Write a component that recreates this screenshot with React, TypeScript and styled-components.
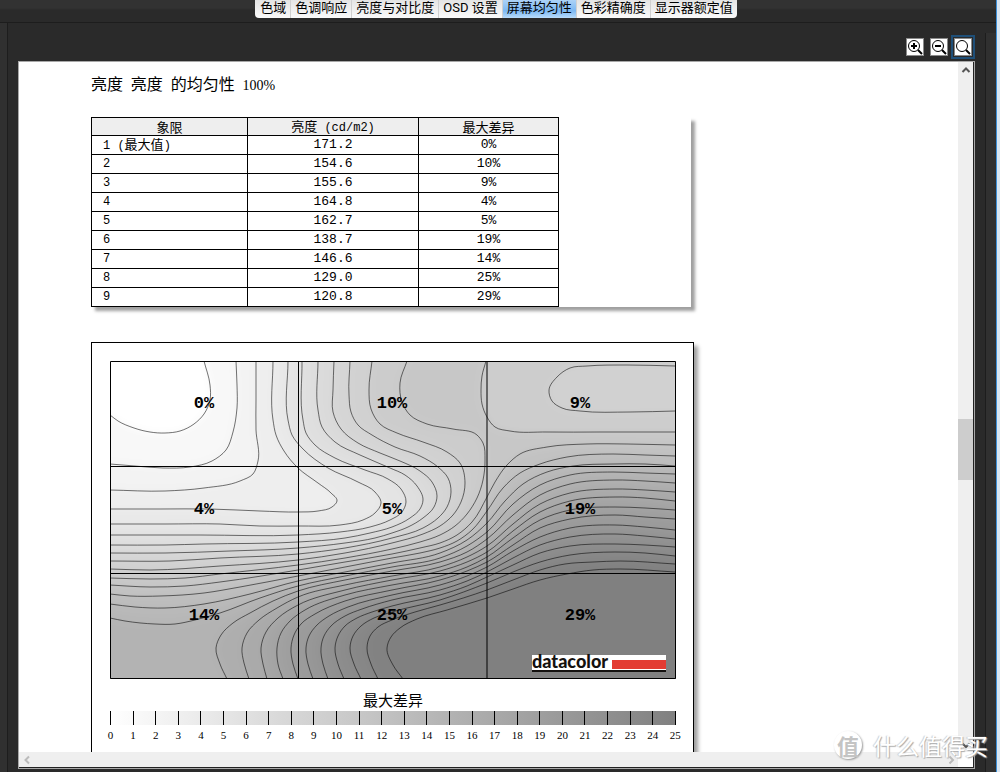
import React from 'react';
import styled, { createGlobalStyle, css } from 'styled-components';

const GlobalStyle = createGlobalStyle`
  * { box-sizing: border-box; }
  body {
    margin: 0;
    background: #2a2a2a;
    color: #000;
    font-family: "Noto Sans CJK SC", sans-serif;
  }
  button { font-family: inherit; padding: 0; cursor: pointer; }
`;

const Window = styled.div`
  position: relative;
  display: flex;
  height: 100vh;
  background: linear-gradient(#323232 8px, #2a2a2a 10px);
`;

const Body = styled.div`
  flex: 1;
  min-width: 0;
  display: flex;
  flex-direction: column;
`;

const WindowEdge = styled.div`
  width: 4px;
  border-left: 1px solid #3c8fd8;
  background: #d9e6f2;
`;

const TabRow = styled.nav`
  height: 23px;
  display: flex;
  justify-content: center;
  align-items: flex-start;
  padding-right: 4px;
  border-bottom: 1px solid #1d1d1d;
`;

const TabGroup = styled.div`
  display: flex;
  height: 18px;
  border-radius: 0 0 4px 4px;
  background: linear-gradient(#e4e4e4, #fafafa);
`;

const Tab = styled.button<{ $active?: boolean }>`
  height: 18px;
  padding: 0 4px 3px;
  border: 0;
  border-right: 1px solid #d0d0d0;
  background: transparent;
  font-family: Roboto, "Noto Sans CJK SC", sans-serif;
  font-size: 13px;
  line-height: 15px;
  white-space: nowrap;
  color: #000;
  &:first-child { padding-left: 5px; }
  &:last-child { border-right: 0; }
  ${p => p.$active && css`
    background: linear-gradient(#acd2f7, #7cb8f2 60%, #b9dcfb);
  `}
`;

const Columns = styled.div`
  flex: 1;
  min-height: 0;
  display: flex;
`;

const Rail = styled.div<{ $side: 'left' | 'right' }>`
  ${p => p.$side === 'left'
    ? css`width: 8px; border-right: 1px solid #1d1d1d; background: #303030;`
    : css`width: 11px; margin-top: 10px; border-left: 1px solid #1d1d1d; background: #303030;`}
`;

const Main = styled.main`
  flex: 1;
  min-width: 0;
  display: flex;
  flex-direction: column;
  padding: 0 10px 3px;
`;

const ZoomBar = styled.div`
  height: 38px;
  display: flex;
  justify-content: flex-end;
  align-items: center;
  padding-top: 10px;
`;

const ZoomButton = styled.button<{ $focused?: boolean }>`
  width: 24px;
  height: 24px;
  display: grid;
  place-items: center;
  border: 2px solid ${p => (p.$focused ? '#1f4f78' : 'transparent')};
  background: transparent;
  svg { display: block; border: 1px solid #8a8a8a; background: #fff; }
`;

const Viewer = styled.div`
  flex: 1;
  min-height: 0;
  display: grid;
  grid-template-columns: minmax(0, 1fr) 15px;
  grid-template-rows: minmax(0, 1fr) 15px;
  padding: 0 1px 1px 0;
  border: 1px solid #a8a8a8;
  background: #222;
`;

const Page = styled.div`
  overflow: hidden;
  padding: 9px 72px 0;
  background: #fff;
`;

const Bar = styled.div<{ $vertical?: boolean }>`
  display: flex;
  flex-direction: ${p => (p.$vertical ? 'column' : 'row')};
  justify-content: space-between;
  background: #efefef;
`;

const Corner = styled.div`
  background: #fff;
`;

const Arrow = styled.button<{ $tone: string }>`
  width: 15px;
  height: 15px;
  display: grid;
  place-items: center;
  border: 0;
  background: transparent;
  color: ${p => p.$tone};
`;

const Track = styled.div`
  flex: 1;
  display: flex;
  flex-direction: column;
`;

const Space = styled.div<{ $grow: number }>`
  flex: ${p => p.$grow};
`;

const Thumb = styled.div`
  height: 61px;
  background: #cdcdcd;
`;

const Title = styled.h1`
  margin: 0 0 18px;
  font: 400 13px/24px "Liberation Mono", monospace;
`;

const TitleWord = styled.span`
  font: 400 16px/24px "Noto Sans CJK SC", sans-serif;
`;

const TitleValue = styled.span`
  font: 400 14px/24px "Liberation Serif", serif;
`;

const TableCard = styled.section`
  max-width: 600px;
  margin-bottom: 35px;
  background: #fff;
  box-shadow: 4px 4px 3px #a0a0a0;
`;

const Table = styled.table`
  width: 468px;
  border-collapse: collapse;
  table-layout: fixed;
  font-size: 13px;
  line-height: 16px;
`;

const HeadCell = styled.th<{ $width: number }>`
  width: ${p => p.$width}px;
  height: 18px;
  padding: 0;
  border: 1px solid #000;
  background: #eee;
  font-weight: 400;
  line-height: 14px;
`;

const Unit = styled.span`
  font: 12px/14px "Liberation Mono", monospace;
`;

const NameCell = styled.th`
  height: 19px;
  padding: 0 0 0 11px;
  border: 1px solid #000;
  text-align: left;
  font: 400 12px/16px "Liberation Mono", "Noto Sans CJK SC", monospace;
`;

const Note = styled.span`
  font-size: 13px;
  line-height: 16px;
  font-family: "Noto Sans CJK SC", sans-serif;
`;

const ValueCell = styled.td`
  padding: 0;
  border: 1px solid #000;
  text-align: center;
  font: 13px/16px "Liberation Mono", monospace;
`;

const ChartCard = styled.section`
  max-width: 603px;
  height: 500px;
  padding: 18px 17px 0 18px;
  border: 1px solid #000;
  background: #fff;
  box-shadow: 4px 4px 4px #a0a0a0;
`;

const Plot = styled.svg`
  display: block;
  width: 100%;
  height: auto;
`;

const PlotLabel = styled.text`
  font: bold 17px "Liberation Mono", monospace;
  text-anchor: middle;
`;

const LogoText = styled.text`
  font: 900 18px Lato, sans-serif;
  fill: #14110f;
`;

const ScaleTitle = styled.h2`
  margin: 10px 0 0;
  text-align: center;
  font-size: 15px;
  line-height: 22px;
  font-weight: 400;
`;

const Scale = styled.div`
  display: flex;
  justify-content: space-between;
  height: 14px;
  background: linear-gradient(to right, #fff, #808080);
`;

const Tick = styled.div`
  width: 1px;
  display: flex;
  flex-direction: column;
  align-items: center;
  font: 11px/14px "Liberation Serif", serif;
  &::before {
    content: "";
    flex: none;
    width: 1px;
    height: 14px;
    margin-bottom: 3px;
    background: #000;
  }
`;

const Watermark = styled.div`
  position: absolute;
  right: 12px;
  bottom: 11px;
  display: flex;
  align-items: center;
  gap: 11px;
  color: #fff;
  font-size: 23px;
  line-height: 32px;
  text-shadow: 1px 1px 1px #aaa, -1px 0 1px #ccc;
`;

const Seal = styled.span`
  width: 28px;
  height: 28px;
  border-radius: 50%;
  background: #fff;
  box-shadow: 1px 1px 2px #999;
  color: #c4c4c4;
  font-size: 22px;
  line-height: 28px;
  font-weight: 700;
  text-align: center;
  text-shadow: none;
`;

type Point = [number, number];

// Contour lines in ascending order of deviation from the brightest quadrant.
const contours: string[] = [
  '110,415 118,421 134,428 150,432 165,433 180,431 194,424 204,414 210,400 210,385 204,361',
  '110,464 135,466 163,468 190,467 212,461 226,450 233,432 237,408 237,385 236,361',
  '110,490 165,491 204,488 240,481 253,474 258,461 256,430 256,400 256,361',
  '110,509 160,509 210,509 260,511 298,512 318,511 332,507 337,501 331,493 318,483 298,468 284,451 276,435 273,420 273,361',
  '110,524 165,524 220,524 260,526 298,526 340,525 363,520 375,513 381,503 375,492 358,482 328,468 303,449 292,435 288,420 288,361',
  '110,535 200,535 298,535 340,532 370,527 390,520 402,512 406,502 401,489 388,479 365,470 335,458 315,445 306,433 303,420 302,361',
  '110,545 165,545 204,544 298,542 345,538 370,533 392,527 410,518 420,509 423,500 417,486 405,475 390,468 360,455 335,442 322,427 318,410 318,361',
  '110,553 165,553 230,551 298,548 345,543 375,538 392,533 408,527 423,518 434,507 437,496 432,482 420,471 400,461 380,453 358,443 341,429 333,412 333,390 334,361',
  '110,561 170,561 220,558 298,554 345,548 392,538 423,528 438,518 447,507 451,492 448,478 438,467 420,456 395,447 372,435 358,425 351,412 349,395 350,361',
  '110,569 150,570 220,566 298,560 345,553 392,543 423,534 440,526 453,515 461,502 465,483 460,463 447,452 423,442 397,433 380,424 371,409 369,390 372,361',
  '110,578 150,579 185,578 220,574 298,565 345,558 392,549 420,542 440,535 455,526 467,514 477,498 483,480 485,460 483,443 477,435 453,429 427,424 410,415 402,402 400,383 407,361',
  '110,585 150,587 185,586 220,582 298,570 345,562 392,554 420,548 440,543 457,535 472,522 487,497 495,482 507,465 520,454 547,447 587,444 627,444 675,445',
  '110,594 130,596 160,596 204,593 240,587 298,576 345,567 392,558 420,553 440,548 457,541 472,530 487,511 503,488 520,473 540,464 567,457 613,454 645,455 675,456',
  '110,604 135,607 165,608 204,604 250,594 298,581 345,572 392,563 440,553 467,540 487,523 505,501 523,484 547,472 573,466 613,464 645,464 675,466',
  '110,618 125,621 155,624 175,624 195,620 220,613 260,598 298,586 345,576 392,567 440,558 467,546 487,532 513,504 540,485 570,475 613,472 645,473 675,474',
  '227,679 220,664 216,648 221,635 233,623 250,613 273,601 298,591 345,580 392,571 440,562 467,552 487,539 513,515 540,495 570,484 615,480 645,481 675,483',
  '249,679 244,663 242,648 247,633 259,620 277,608 298,597 345,585 392,576 440,567 467,557 487,546 513,524 540,504 570,493 615,489 645,490 675,492',
  '267,679 263,664 261,648 266,632 278,618 298,605 345,590 392,580 440,571 467,562 487,552 513,531 540,512 570,501 615,497 645,498 675,501',
  '283,679 278,664 277,648 281,633 290,621 305,610 345,595 392,585 440,576 467,567 487,557 513,538 540,520 570,510 615,507 645,508 675,510',
  '298,679 293,664 291,648 294,635 301,624 315,614 345,601 392,590 440,580 467,571 487,562 513,545 540,528 570,519 615,515 645,517 675,519',
  '313,679 308,664 306,648 309,636 317,625 329,616 348,607 392,595 440,585 467,576 487,567 513,551 540,537 570,528 615,525 645,527 675,530',
  '328,679 323,664 321,648 324,636 331,626 345,616 362,609 392,600 440,590 467,581 487,572 513,558 540,545 570,537 615,534 645,536 675,539',
  '344,679 338,664 335,648 338,636 345,626 357,618 372,612 392,606 440,595 467,586 487,577 513,565 540,553 570,546 615,544 645,545 675,547',
  '361,679 354,664 350,648 353,636 361,626 374,618 392,612 440,600 487,583 513,572 540,562 570,555 615,552 645,553 675,556',
  '378,679 371,664 367,648 370,636 378,627 392,620 415,612 440,605 487,590 513,580 540,570 565,564 593,562 620,561 675,564',
  '403,679 393,665 387,648 391,637 400,628 417,619 447,610 487,598 513,589 540,580 567,574 593,570 620,569 675,572',
];

const saddle = '486,361 482,376 481,390 482,404 487,417 495,427 510,431 547,432 600,432 675,432';
const dimple = '675,366 627,365 587,366 570,368 557,377 549,390 552,401 562,408 580,411 630,412 675,411';

const parse = (source: string): Point[] =>
  source.split(' ').map(pair => pair.split(',').map(Number) as Point);

// Smooth curve through the points. The direction at each point leans towards
// its shorter neighbouring segment; handles are a third of a segment long.
function curve(points: Point[]): string {
  const tangents = points.map((p, i) => {
    const a = points[Math.max(0, i - 1)];
    const b = points[Math.min(points.length - 1, i + 1)];
    const before = Math.hypot(p[0] - a[0], p[1] - a[1]) || 1;
    const after = Math.hypot(b[0] - p[0], b[1] - p[1]) || 1;
    const x = (p[0] - a[0]) * after / before + (b[0] - p[0]) * before / after;
    const y = (p[1] - a[1]) * after / before + (b[1] - p[1]) * before / after;
    const length = Math.hypot(x, y) || 1;
    return [x / length, y / length];
  });
  let path = '';
  for (let i = 1; i < points.length; i++) {
    const [p, q] = [points[i - 1], points[i]];
    const h = Math.hypot(q[0] - p[0], q[1] - p[1]) / 3;
    const [s, t] = [tangents[i - 1], tangents[i]];
    const c = [p[0] + s[0] * h, p[1] + s[1] * h, q[0] - t[0] * h, q[1] - t[1] * h];
    path += ` C${c.map(v => v.toFixed(1)).join(' ')} ${q[0]} ${q[1]}`;
  }
  return path;
}

const line = (source: string) => {
  const points = parse(source);
  return `M${points[0].join(' ')}${curve(points)}`;
};

// Pushes a point on the plot's edge beyond it, so a fill runs off the plot.
const outside = ([x, y]: Point): Point => {
  if (x <= 110) return [60, y];
  if (x >= 675) return [730, y];
  return y <= 361 ? [x, 310] : [x, 730];
};

const area = (source: string, corners: string) => {
  const points = parse(source);
  const first = outside(points[0]);
  const last = outside(points[points.length - 1]);
  return `M${first.join(' ')} L${points[0].join(' ')}${curve(points)} L${last.join(' ')} ${corners}Z`;
};

const cornersFor = (index: number) => {
  if (index < 11) return 'L730 310 L730 730 L60 730';
  return index < 15 ? 'L730 730 L60 730' : 'L730 730';
};

const shade = (level: number) => {
  const v = Math.round(255 - (level * 127) / 26);
  return `rgb(${v},${v},${v})`;
};

const plotLabels = [
  ['0%', '10%', '9%'],
  ['4%', '5%', '19%'],
  ['14%', '25%', '29%'],
];

function UniformityPlot() {
  return (
    <Plot viewBox="110 361 566 318" role="img" aria-label="亮度均匀性">
      <defs>
        <clipPath id="plot"><rect x="110" y="361" width="566" height="318" /></clipPath>
        <filter id="blend" filterUnits="userSpaceOnUse" x="60" y="310" width="670" height="420">
          <feGaussianBlur stdDeviation="4" />
        </filter>
      </defs>
      <g clipPath="url(#plot)">
        <rect x="110" y="361" width="566" height="318" fill="#fff" />
        <g filter="url(#blend)">
          <rect x="40" y="290" width="710" height="460" fill="#fff" />
          {contours.map((c, i) => (
            <path key={i} d={area(c, cornersFor(i))} fill={shade(i === 25 ? 26 : i + 1.5)} />
          ))}
          <path d={area(saddle, 'L730 310')} fill={shade(10.3)} />
          <path d={area(dimple, '')} fill={shade(9.4)} />
        </g>
        <g fill="none" stroke="#000" strokeOpacity="0.55">
          {[...contours, saddle, dimple].map((c, i) => <path key={i} d={line(c)} />)}
        </g>
      </g>
      <path
        d="M298.5 361V679M487 361V679M110 466.5H676M110 573.5H676M110.500 361.5H675.500V678.500H110.500Z"
        fill="none"
        stroke="#000"
      />
      {plotLabels.map((row, r) =>
        row.map((label, c) => (
          <PlotLabel key={label} x={204 + c * 188} y={408 + r * 106}>{label}</PlotLabel>
        )),
      )}
      <rect x="532" y="655" width="134" height="16" fill="#fff" />
      <rect x="612" y="660" width="54" height="9" fill="#e33b32" />
      <rect x="532" y="670" width="134" height="2" fill="#14110f" />
      <LogoText x="532" y="668">datacolor</LogoText>
    </Plot>
  );
}

const rows: [string, string, string][] = [
  ['1', '171.2', '0%'],
  ['2', '154.6', '10%'],
  ['3', '155.6', '9%'],
  ['4', '164.8', '4%'],
  ['5', '162.7', '5%'],
  ['6', '138.7', '19%'],
  ['7', '146.6', '14%'],
  ['8', '129.0', '25%'],
  ['9', '120.8', '29%'],
];

const tabs = ['色域', '色调响应', '亮度与对比度', 'OSD 设置', '屏幕均匀性', '色彩精确度', '显示器额定值'];

const zoomTools = [
  { name: '放大', sign: 'M4 7H10M7 4V10' },
  { name: '缩小', sign: 'M4 7H10' },
  { name: '实际大小', sign: '' },
];

const chevrons = {
  up: 'M1.500 7L5 3.500L8.500 7',
  down: 'M1.500 3.500L5 7L8.500 3.500',
  left: 'M7 1.500L3.500 5L7 8.500',
  right: 'M3.500 1.500L7 5L3.500 8.500',
};

function ScrollArrow({ to, tone, label }: { to: keyof typeof chevrons; tone: string; label: string }) {
  return (
    <Arrow $tone={tone} aria-label={label}>
      <svg width="10" height="10" viewBox="0 0 10 10">
        <path d={chevrons[to]} fill="none" stroke="currentColor" strokeWidth="2" />
      </svg>
    </Arrow>
  );
}

export default function App() {
  return (
    <Window>
      <GlobalStyle />
      <Body>
        <TabRow>
          <TabGroup>
            {tabs.map(tab => <Tab key={tab} $active={tab === '屏幕均匀性'}>{tab}</Tab>)}
          </TabGroup>
        </TabRow>
        <Columns>
          <Rail $side="left" />
          <Main>
            <ZoomBar>
              {zoomTools.map((tool, i) => (
                <ZoomButton key={tool.name} aria-label={tool.name} $focused={i === 2}>
                  <svg width="18" height="18" viewBox="0 0 16 16">
                    <circle cx="7" cy="7" r="5.500" fill="none" stroke="#000" />
                    <path d="M11 11L15 15" stroke="#000" strokeWidth="2" />
                    {tool.sign && <path d={tool.sign} stroke="#000" strokeWidth="2" />}
                  </svg>
                </ZoomButton>
              ))}
            </ZoomBar>
            <Viewer>
              <Page>
                <Title>
                  <TitleWord>亮度</TitleWord> <TitleWord>亮度</TitleWord> <TitleWord>的均匀性</TitleWord>{' '}
                  <TitleValue>100%</TitleValue>
                </Title>
                <TableCard>
                  <Table>
                    <thead>
                      <tr>
                        <HeadCell $width={156}>象限</HeadCell>
                        <HeadCell $width={171}>亮度<Unit> (cd/m2)</Unit></HeadCell>
                        <HeadCell $width={140}>最大差异</HeadCell>
                      </tr>
                    </thead>
                    <tbody>
                      {rows.map(([name, value, diff], i) => (
                        <tr key={name}>
                          <NameCell scope="row">
                            {name}{i === 0 && <> (<Note>最大值</Note>)</>}
                          </NameCell>
                          <ValueCell>{value}</ValueCell>
                          <ValueCell>{diff}</ValueCell>
                        </tr>
                      ))}
                    </tbody>
                  </Table>
                </TableCard>
                <ChartCard>
                  <UniformityPlot />
                  <ScaleTitle>最大差异</ScaleTitle>
                  <Scale>
                    {Array.from({ length: 26 }, (_, i) => <Tick key={i}>{i}</Tick>)}
                  </Scale>
                </ChartCard>
              </Page>
              <Bar $vertical>
                <ScrollArrow to="up" tone="#555" label="向上滚动" />
                <Track>
                  <Space $grow={341} />
                  <Thumb />
                  <Space $grow={257} />
                </Track>
                <ScrollArrow to="down" tone="#555" label="向下滚动" />
              </Bar>
              <Bar>
                <ScrollArrow to="left" tone="#bbb" label="向左滚动" />
                <ScrollArrow to="right" tone="#bbb" label="向右滚动" />
              </Bar>
              <Corner />
            </Viewer>
          </Main>
          <Rail $side="right" />
        </Columns>
      </Body>
      <WindowEdge />
      <Watermark><Seal>值</Seal>什么值得买</Watermark>
    </Window>
  );
}
